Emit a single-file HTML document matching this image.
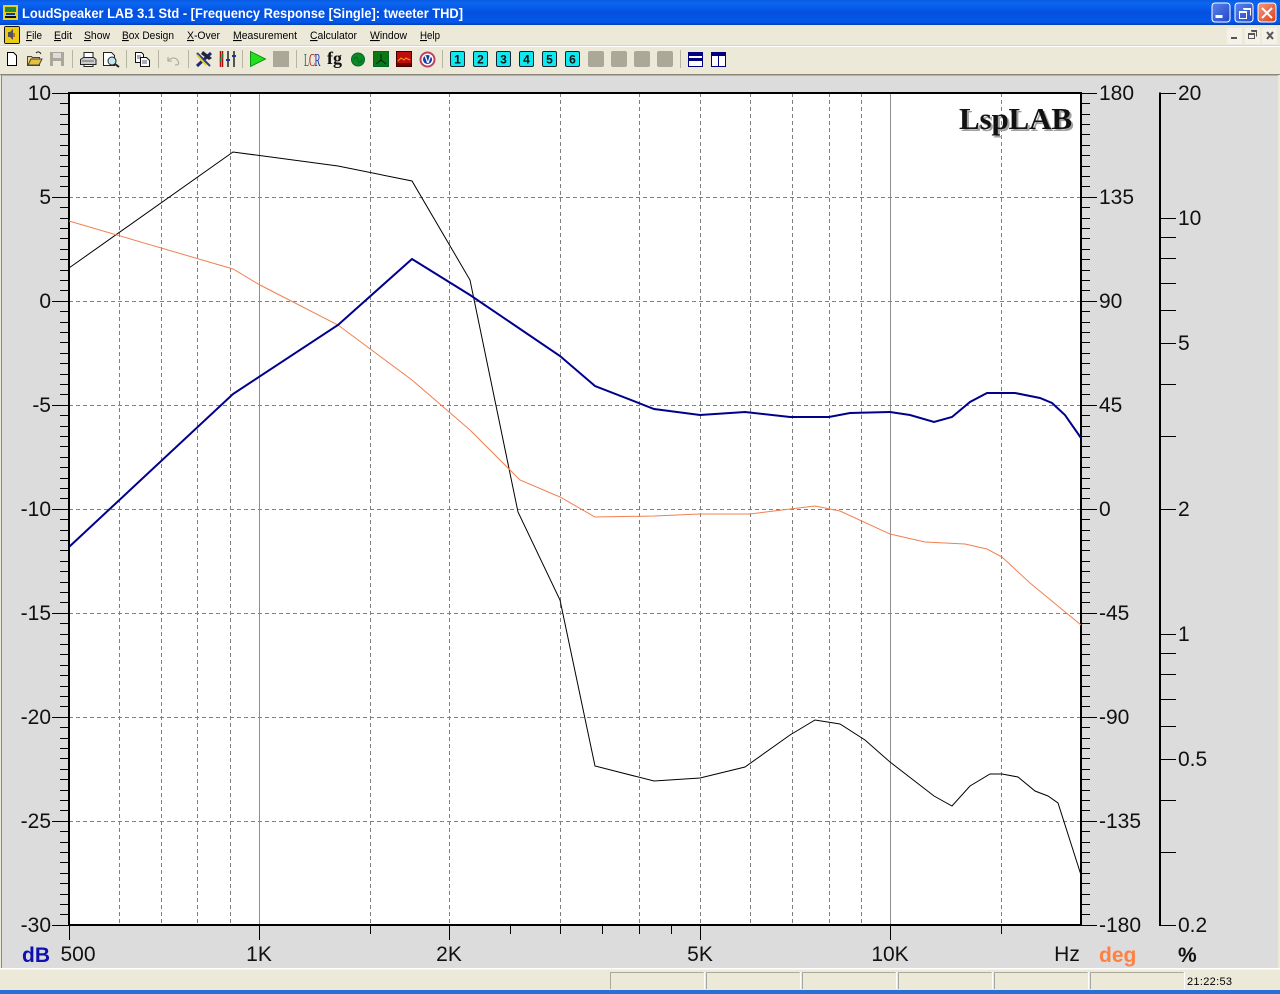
<!DOCTYPE html>
<html><head><meta charset="utf-8"><title>LoudSpeaker LAB</title>
<style>html,body{margin:0;padding:0;background:#ece9d8;width:1280px;height:994px;overflow:hidden}svg{display:block;font-family:"Liberation Sans",sans-serif}</style>
</head><body>
<svg width="1280" height="994" viewBox="0 0 1280 994" xmlns="http://www.w3.org/2000/svg">
<defs>
<linearGradient id="tb" x1="0" y1="0" x2="0" y2="1"><stop offset="0" stop-color="#0a5ae0"/><stop offset=".12" stop-color="#0a66f0"/><stop offset=".5" stop-color="#0450e0"/><stop offset=".88" stop-color="#0358e8"/><stop offset="1" stop-color="#0240b8"/></linearGradient>
<linearGradient id="bl" x1="0" y1="0" x2="1" y2="1"><stop offset="0" stop-color="#5b84ee"/><stop offset="1" stop-color="#2345c4"/></linearGradient>
<linearGradient id="rd" x1="0" y1="0" x2="1" y2="1"><stop offset="0" stop-color="#f49a80"/><stop offset="1" stop-color="#d8401c"/></linearGradient>
</defs>
<rect width="1280" height="994" fill="#ece9d8"/>
<!-- title bar -->
<rect width="1280" height="25" fill="url(#tb)"/>
<rect x="3" y="5" width="15" height="15" fill="#e8d020"/><rect x="5" y="7" width="11" height="5" fill="#1a8a40"/><rect x="6" y="13" width="9" height="2" fill="#0a3a90"/><rect x="5" y="16" width="11" height="2" fill="#111"/>
<text x="22" y="18" font-size="14" font-weight="bold" fill="#fff" textLength="441" lengthAdjust="spacingAndGlyphs">LoudSpeaker LAB 3.1 Std - [Frequency Response [Single]: tweeter THD]</text>
<rect x="1212" y="3" width="18" height="19" rx="3" fill="url(#bl)" stroke="#fff"/><rect x="1215.500" y="15" width="7" height="3" fill="#fff"/>
<rect x="1235" y="3" width="18" height="19" rx="3" fill="url(#bl)" stroke="#fff"/>
<path d="M1243.500 9.500h7v6M1239.500 12.500h7v6h-7z" fill="none" stroke="#fff"/><path d="M1243 8.500h8M1239 11.500h8" stroke="#fff"/>
<rect x="1258" y="3" width="18" height="19" rx="3" fill="url(#rd)" stroke="#fff"/><path d="M1262 8l10 10M1272 8l-10 10" stroke="#fff" stroke-width="2"/>
<!-- menu -->
<rect x="4" y="26" width="16" height="18" rx="2" fill="#111"/><rect x="5" y="27" width="14" height="16" fill="#e8cc18"/><path d="M8 32h2l3-3v11l-3-3H8z" fill="#555"/><path d="M14 33v4" stroke="#a01010"/>
<g font-size="11" fill="#000">
<text x="26" y="39" textLength="16" lengthAdjust="spacingAndGlyphs"><tspan text-decoration="underline">F</tspan>ile</text>
<text x="54" y="39" textLength="18" lengthAdjust="spacingAndGlyphs"><tspan text-decoration="underline">E</tspan>dit</text>
<text x="84" y="39" textLength="26" lengthAdjust="spacingAndGlyphs"><tspan text-decoration="underline">S</tspan>how</text>
<text x="122" y="39" textLength="52" lengthAdjust="spacingAndGlyphs"><tspan text-decoration="underline">B</tspan>ox Design</text>
<text x="187" y="39" textLength="33" lengthAdjust="spacingAndGlyphs"><tspan text-decoration="underline">X</tspan>-Over</text>
<text x="233" y="39" textLength="64" lengthAdjust="spacingAndGlyphs"><tspan text-decoration="underline">M</tspan>easurement</text>
<text x="310" y="39" textLength="47" lengthAdjust="spacingAndGlyphs"><tspan text-decoration="underline">C</tspan>alculator</text>
<text x="370" y="39" textLength="37" lengthAdjust="spacingAndGlyphs"><tspan text-decoration="underline">W</tspan>indow</text>
<text x="420" y="39" textLength="20" lengthAdjust="spacingAndGlyphs"><tspan text-decoration="underline">H</tspan>elp</text>
</g>
<rect x="1227" y="28" width="15" height="16" fill="#f4f2e8"/><rect x="1231" y="37" width="6" height="2" fill="#555"/>
<rect x="1245" y="28" width="15" height="16" fill="#f4f2e8"/><path d="M1251.500 31.500h5v5M1248.500 34.500h6v4h-6z" fill="none" stroke="#555"/><path d="M1248 33.500h7M1251 30.500h6" stroke="#555"/>
<rect x="1262" y="28" width="15" height="16" fill="#f4f2e8"/><path d="M1267 32l6 7M1273 32l-6 7" stroke="#555" stroke-width="2"/>
<rect x="0" y="46" width="1280" height="1" fill="#fff"/>
<rect x="0" y="45" width="1280" height="1" fill="#d8d4c2"/>
<!-- toolbar -->
<g>
<path d="M7.500 52.500h6l3 3v10h-9z" fill="#fff" stroke="#000"/>
<path d="M27.500 65.500v-9h4l1 1h7v8z" fill="#f0d868" stroke="#444"/><path d="M28 65l3-6h11l-3 6z" fill="#e8c040" stroke="#444"/><path d="M36 53c2-2 4-1 5 1" fill="none" stroke="#222"/>
<rect x="50" y="52" width="14" height="14" fill="#aca899"/><rect x="53" y="53" width="8" height="5" fill="#ddd"/><rect x="53" y="61" width="8" height="5" fill="#ece9d8"/>
<g stroke="#b8b4a2"><path d="M72.500 50v18M126.500 50v18M158.500 50v18M188.500 50v18M242.500 50v18M296.500 50v18M442.500 50v18M680.500 50v18"/></g>
<path d="M84 58v-5.500h9V58" fill="#fff" stroke="#222"/><path d="M80.500 59.500l3-2h10l2.500 2v5h-15.500z" fill="#ccc" stroke="#222"/><path d="M84 64.500h9v2h-9z" fill="#fff" stroke="#222"/><path d="M82 61h12" stroke="#666"/>
<path d="M103.500 52.500h8l3 3v10h-11z" fill="#fff" stroke="#222"/><circle cx="112" cy="61" r="4" fill="#bfe8f0" stroke="#222"/><path d="M115 64l4 3" stroke="#222" stroke-width="2"/>
<path d="M135.500 52.500h6l2 2v8h-8z" fill="#fff" stroke="#111"/><path d="M140.500 57.500h6l3 3v6h-9z" fill="#fff" stroke="#111"/><path d="M137 56h4M137 58h3M142 61h5M142 63h5" stroke="#223" stroke-width=".8"/>
<path d="M168 61c3-4 8-4 10 0s-1 4-3 4M168 57v4h4" fill="none" stroke="#b4b0a0" stroke-width="1.300"/>
<path d="M197 66l14-13" stroke="#1a2a80" stroke-width="3"/><path d="M197 53l13 13" stroke="#2a3a90" stroke-width="2"/><path d="M197 55l9 10" stroke="#e8d020" stroke-width="2"/><path d="M203 51l9 7-3 2-8-6z" fill="#223"/>
<g><path d="M220.500 51v16M222.500 51v16" stroke="#b01010" stroke-width="1.500"/><path d="M220.500 58v4M222.500 54v4" stroke="#108030" stroke-width="1.500"/><path d="M228 51v16M234 51v16" stroke="#222" stroke-width="1.500"/><rect x="226" y="59" width="4" height="2" fill="#1a3a90"/><rect x="232" y="55" width="4" height="2" fill="#1a3a90"/></g>
<path d="M250.500 51.500v15l15-7.500z" fill="#22e020" stroke="#109010"/>
<rect x="273" y="51" width="16" height="16" fill="#aca899"/>
<g font-family="Liberation Serif,serif" font-size="18"><text x="304" y="66" fill="#107040" textLength="5" lengthAdjust="spacingAndGlyphs">L</text><text x="309" y="66" fill="#b01010" textLength="6" lengthAdjust="spacingAndGlyphs">C</text><text x="314.500" y="66" fill="#1030b0" textLength="6" lengthAdjust="spacingAndGlyphs">R</text></g>
<text x="327" y="64" font-family="Liberation Serif,serif" font-weight="bold" font-size="18" fill="#111" textLength="15" lengthAdjust="spacingAndGlyphs">fg</text>
<circle cx="358" cy="59.500" r="6.500" fill="#0c8a20" stroke="#063"/><path d="M354 60c1-4 3-4 4 0s3 3 4-1" fill="none" stroke="#063"/>
<rect x="373.500" y="51.500" width="15" height="15" fill="#0a7a10" stroke="#063"/><path d="M376 64l5-4 5 4M381 60v-6" fill="none" stroke="#022"/>
<rect x="396.500" y="51.500" width="15" height="15" fill="#c00c0c" stroke="#400"/><path d="M398 61l3-3 3 2 2-2 4 2" fill="none" stroke="#f0a020"/><rect x="397" y="63" width="14" height="3" fill="#700"/>
<circle cx="427.500" cy="59.500" r="7" fill="#fff" stroke="#c04060" stroke-width="2"/><circle cx="427.500" cy="59.500" r="4.500" fill="#1a3aa0"/><text x="424.500" y="63" font-size="10" font-weight="bold" fill="#fff">V</text>
<g font-size="12" font-weight="bold" fill="#111" text-anchor="middle">
<rect x="450.500" y="51.500" width="14" height="15" rx="1.500" fill="#10e8f0" stroke="#123"/><text x="457.500" y="63.500">1</text>
<rect x="473.500" y="51.500" width="14" height="15" rx="1.500" fill="#10e8f0" stroke="#123"/><text x="480.500" y="63.500">2</text>
<rect x="496.500" y="51.500" width="14" height="15" rx="1.500" fill="#10e8f0" stroke="#123"/><text x="503.500" y="63.500">3</text>
<rect x="519.500" y="51.500" width="14" height="15" rx="1.500" fill="#10e8f0" stroke="#123"/><text x="526.500" y="63.500">4</text>
<rect x="542.500" y="51.500" width="14" height="15" rx="1.500" fill="#10e8f0" stroke="#123"/><text x="549.500" y="63.500">5</text>
<rect x="565.500" y="51.500" width="14" height="15" rx="1.500" fill="#10e8f0" stroke="#123"/><text x="572.500" y="63.500">6</text>
</g>
<g fill="#aca899"><rect x="588" y="51" width="16" height="16" rx="2"/><rect x="611" y="51" width="16" height="16" rx="2"/><rect x="634" y="51" width="16" height="16" rx="2"/><rect x="657" y="51" width="16" height="16" rx="2"/></g>
<rect x="688.500" y="52.500" width="14" height="14" fill="#fff" stroke="#000080"/><rect x="689" y="53" width="13" height="3" fill="#000080"/><rect x="689" y="58" width="13" height="3" fill="#000080"/>
<rect x="711.500" y="52.500" width="14" height="14" fill="#fff" stroke="#000080"/><rect x="712" y="53" width="13" height="3" fill="#000080"/><path d="M718.500 53v13" stroke="#000080"/>
</g>
<!-- chart panel -->
<rect x="0" y="74" width="1280" height="895" fill="#dcdcdc"/>
<rect x="0" y="74" width="1280" height="1.500" fill="#8a8778"/>
<rect x="0" y="75" width="1" height="894" fill="#ece9d8"/>
<rect x="1" y="75" width="1" height="894" fill="#8a8a82"/>
<rect x="1278" y="75" width="2" height="894" fill="#ece9d8"/>
<rect x="0" y="968" width="1280" height="1.500" fill="#fff"/>
<rect x="0" y="969.500" width="1280" height="21" fill="#ece9d8"/>
<rect x="0" y="990" width="1280" height="4" fill="#2a6ed8"/>
<!-- status panels -->
<g fill="none">
<path d="M610.500 989V972.500H703.500M706.500 989V972.500H799.500M802.500 989V972.500H895.500M898.500 989V972.500H991.500M994.500 989V972.500H1087.500M1090.500 989V972.500H1183.500" stroke="#aca899"/>
<path d="M704.500 972V989M800.500 972V989M896.500 972V989M992.500 972V989M1088.500 972V989M1184.500 972V989" stroke="#fff"/>
</g>
<text x="1187" y="985" font-size="11" fill="#000" textLength="45">21:22:53</text>
<!-- plot -->
<rect x="69" y="93" width="1012" height="832" fill="#fff"/>
<g stroke="#808080" stroke-width="1" stroke-dasharray="4 3" fill="none">
<path d="M69 197.500H1081M69 301.500H1081M69 405.500H1081M69 509.500H1081M69 613.500H1081M69 717.500H1081M69 821.500H1081"/>
<path d="M119.500 93V925M161.500 93V925M197.500 93V925M230.500 93V925M370.500 93V925M449.500 93V925M560.500 93V925M639.500 93V925M700.500 93V925M750.500 93V925M792.500 93V925M829.500 93V925M861.500 93V925M1001.500 93V925"/>
</g>
<path d="M259.500 93V925M890.500 93V925" stroke="#909090"/>
<!-- ticks -->
<g stroke="#000" fill="none">
<path d="M69.500 925V940M259.500 925V940M449.500 925V940M700.500 925V940M890.500 925V940"/>
<path d="M370.500 925V934M510.500 925V934M560.500 925V934M602.500 925V934M639.500 925V934M671.500 925V934M1001.500 925V934"/>
<path d="M52 93.500H69M52 197.500H69M52 301.500H69M52 405.500H69M52 509.500H69M52 613.500H69M52 717.500H69M52 821.500H69M52 925.500H69"/>
<path d="M60 103.500H69M60 114.500H69M60 124.500H69M60 134.500H69M60 145.500H69M60 155.500H69M60 166.500H69M60 176.500H69M60 186.500H69M60 207.500H69M60 218.500H69M60 228.500H69M60 238.500H69M60 249.500H69M60 259.500H69M60 270.500H69M60 280.500H69M60 290.500H69M60 311.500H69M60 322.500H69M60 332.500H69M60 342.500H69M60 353.500H69M60 363.500H69M60 374.500H69M60 384.500H69M60 394.500H69M60 415.500H69M60 426.500H69M60 436.500H69M60 446.500H69M60 457.500H69M60 467.500H69M60 478.500H69M60 488.500H69M60 498.500H69M60 519.500H69M60 530.500H69M60 540.500H69M60 550.500H69M60 561.500H69M60 571.500H69M60 582.500H69M60 592.500H69M60 602.500H69M60 623.500H69M60 634.500H69M60 644.500H69M60 654.500H69M60 665.500H69M60 675.500H69M60 686.500H69M60 696.500H69M60 706.500H69M60 727.500H69M60 738.500H69M60 748.500H69M60 758.500H69M60 769.500H69M60 779.500H69M60 790.500H69M60 800.500H69M60 810.500H69M60 831.500H69M60 842.500H69M60 852.500H69M60 862.500H69M60 873.500H69M60 883.500H69M60 894.500H69M60 904.500H69M60 914.500H69"/>
<path d="M1081 93.500H1097M1081 197.500H1097M1081 301.500H1097M1081 405.500H1097M1081 509.500H1097M1081 613.500H1097M1081 717.500H1097M1081 821.500H1097M1081 925.500H1097"/>
<path d="M1081 103.500H1090M1081 114.500H1090M1081 124.500H1090M1081 134.500H1090M1081 145.500H1090M1081 155.500H1090M1081 166.500H1090M1081 176.500H1090M1081 186.500H1090M1081 207.500H1090M1081 218.500H1090M1081 228.500H1090M1081 238.500H1090M1081 249.500H1090M1081 259.500H1090M1081 270.500H1090M1081 280.500H1090M1081 290.500H1090M1081 311.500H1090M1081 322.500H1090M1081 332.500H1090M1081 342.500H1090M1081 353.500H1090M1081 363.500H1090M1081 374.500H1090M1081 384.500H1090M1081 394.500H1090M1081 415.500H1090M1081 426.500H1090M1081 436.500H1090M1081 446.500H1090M1081 457.500H1090M1081 467.500H1090M1081 478.500H1090M1081 488.500H1090M1081 498.500H1090M1081 519.500H1090M1081 530.500H1090M1081 540.500H1090M1081 550.500H1090M1081 561.500H1090M1081 571.500H1090M1081 582.500H1090M1081 592.500H1090M1081 602.500H1090M1081 623.500H1090M1081 634.500H1090M1081 644.500H1090M1081 654.500H1090M1081 665.500H1090M1081 675.500H1090M1081 686.500H1090M1081 696.500H1090M1081 706.500H1090M1081 727.500H1090M1081 738.500H1090M1081 748.500H1090M1081 758.500H1090M1081 769.500H1090M1081 779.500H1090M1081 790.500H1090M1081 800.500H1090M1081 810.500H1090M1081 831.500H1090M1081 842.500H1090M1081 852.500H1090M1081 862.500H1090M1081 873.500H1090M1081 883.500H1090M1081 894.500H1090M1081 904.500H1090M1081 914.500H1090"/>
<path d="M1160 93.500H1176M1160 218.500H1176M1160 237.500H1176M1160 258.500H1176M1160 283.500H1176M1160 310.500H1176M1160 343.500H1176M1160 384.500H1176M1160 436.500H1176M1160 509.500H1176M1160 634.500H1176M1160 653.500H1176M1160 674.500H1176M1160 699.500H1176M1160 726.500H1176M1160 759.500H1176M1160 800.500H1176M1160 852.500H1176M1160 925.500H1176"/>
</g>
<rect x="1159" y="92.500" width="2" height="833.500" fill="#000"/>
<!-- frame -->
<rect x="69" y="93" width="1012" height="832" fill="none" stroke="#000" stroke-width="2"/>
<!-- curves -->
<polyline fill="none" stroke="#000" stroke-width="1" points="69,268 233,152 338,166 412,181 470,280 518,512 560,600 595,766 654,781 700,778 745,767 790,735 815,720 840,724 865,740 890,762 934,796 952,806 970,786 990,774 1002,774 1018,777 1035,791 1048,796 1058,803 1081,875"/>
<polyline fill="none" stroke="#f08050" stroke-width="1" points="69,221 233,269 260,285 338,325 412,380 470,430 520,480 560,497 595,517 654,516 700,514 750,514 790,509 815,506 840,511 890,534 925,542 965,544 987,549 1002,557 1030,583 1081,625"/>
<polyline fill="none" stroke="#00008c" stroke-width="2" points="69,547 233,394 338,325 412,259 470,295 560,356 595,386 654,409 700,415 745,412 790,417 829,417 850,413 890,412 910,415 934,422 952,417 970,402 987,393 1015,393 1040,398 1052,403 1065,415 1081,438"/>
<!-- logo -->
<g font-family="Liberation Serif,serif" font-weight="bold" font-size="31">
<text x="961" y="131" fill="#a0a0a0" textLength="113">LspLAB</text>
<text x="959" y="129" fill="#111" textLength="113">LspLAB</text>
</g>
<!-- labels -->
<g font-size="21" fill="#111">
<g text-anchor="end">
<text x="51" y="100">10</text><text x="51" y="204">5</text><text x="51" y="308">0</text><text x="51" y="412">-5</text><text x="51" y="516">-10</text><text x="51" y="620">-15</text><text x="51" y="724">-20</text><text x="51" y="828">-25</text><text x="51" y="932">-30</text>
</g>
<text x="1099" y="100">180</text><text x="1099" y="204">135</text><text x="1099" y="308">90</text><text x="1099" y="412">45</text><text x="1099" y="516">0</text><text x="1099" y="620">-45</text><text x="1099" y="724">-90</text><text x="1099" y="828">-135</text><text x="1099" y="932">-180</text>
<text x="1178" y="100">20</text><text x="1178" y="225">10</text><text x="1178" y="350">5</text><text x="1178" y="516">2</text><text x="1178" y="641">1</text><text x="1178" y="766">0.5</text><text x="1178" y="932">0.2</text>
<g text-anchor="middle">
<text x="78" y="961">500</text><text x="259" y="961">1K</text><text x="449" y="961">2K</text><text x="700" y="961">5K</text><text x="890" y="961">10K</text><text x="1067" y="961">Hz</text>
</g>
</g>
<g font-size="21" font-weight="bold">
<text x="22" y="962" fill="#1010b0">dB</text>
<text x="1099" y="962" fill="#ff8040">deg</text>
<text x="1178" y="962" fill="#111">%</text>
</g>
</svg>
</body></html>
